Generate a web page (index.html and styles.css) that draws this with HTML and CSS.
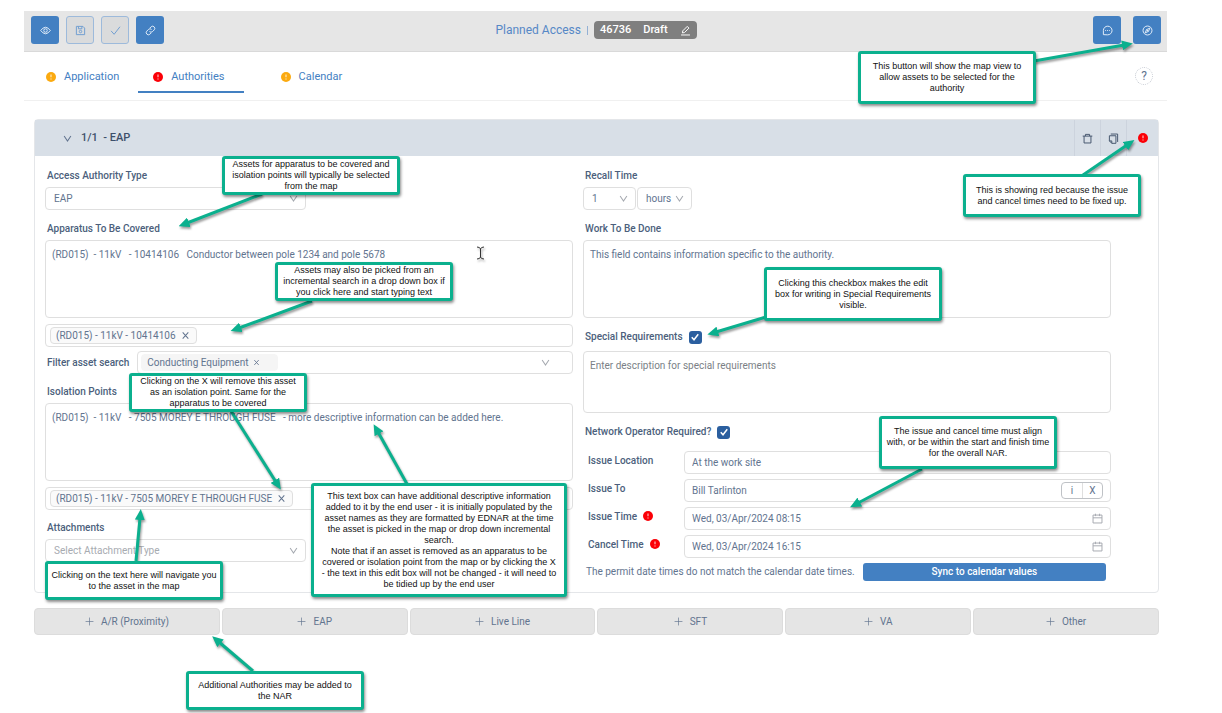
FILE: index.html
```html
<!DOCTYPE html>
<html lang="en">
<head>
<meta charset="utf-8">
<title>Planned Access</title>
<link rel="stylesheet" href="styles.css">
</head>
<body>
<svg class="defs" aria-hidden="true">
  <symbol id="i-eye" viewBox="0 0 16 16"><path d="M1 8Q8-1.500 15 8Q8 17.500 1 8Z"/><circle cx="8" cy="8" r="2.500"/></symbol>
  <symbol id="i-save" viewBox="0 0 16 16"><path d="M2 2h9.500L14 4.500V14H2ZM5 2v3.500h5V2"/><circle cx="8" cy="9.500" r="1.800"/></symbol>
  <symbol id="i-check" viewBox="0 0 16 16"><path d="M1.500 8.500L6 13.500L14.500 2.500"/></symbol>
  <symbol id="i-link" viewBox="0 0 16 16"><path d="M7 4.500L9 2.500a3.200 3.200 0 0 1 4.500 4.500L11 9.500a3.200 3.200 0 0 1-4.500 0M9 11.500L7 13.500A3.200 3.200 0 0 1 2.500 9L5 6.500a3.200 3.200 0 0 1 4.500 0"/></symbol>
  <symbol id="i-message" viewBox="0 0 16 16"><path d="M2 14V8A6.300 6.300 0 1 1 8 14.300Z"/><path d="M4.700 8h1.200M7.400 8h1.200M10.100 8h1.200"/></symbol>
  <symbol id="i-compass" viewBox="0 0 16 16"><circle cx="8" cy="8" r="6.500"/><path d="M11.500 4.500L9.300 9.300L4.500 11.500L6.700 6.700ZM6.700 6.700L9.300 9.300"/></symbol>
  <symbol id="i-edit" viewBox="0 0 16 16"><path d="M3.500 11.500L4 8.500L10.500 2L13 4.500L6.500 11ZM1.500 14.500h13"/></symbol>
  <symbol id="i-trash" viewBox="0 0 16 16"><path d="M1 4.500h14M5 4.500V2h6v2.500M3 4.500V14.500h10V4.500"/></symbol>
  <symbol id="i-copy" viewBox="0 0 16 16"><path d="M4 1.500H14V13M2 4h9.500v11H5.500L2 11.500ZM2 11.500h3.500V15"/></symbol>
  <symbol id="i-calendar" viewBox="0 0 16 16"><path d="M1.500 3h13v11.500h-13ZM1.500 7h13M5 1v3.500M11 1v3.500"/></symbol>
  <symbol id="i-down" viewBox="0 0 16 16"><path d="M2 3.500L8 12.500L14 3.500"/></symbol>
  <symbol id="i-close" viewBox="0 0 16 16"><path d="M3 2.500L13 13.500M13 2.500L3 13.500"/></symbol>
  <symbol id="i-plus" viewBox="0 0 16 16"><path d="M8 1v14M1 8h14"/></symbol>
  <symbol id="i-alert" viewBox="0 0 16 16"><circle class="alert-disc" cx="8" cy="8" r="8"/><path class="alert-mark" d="M8 4v4.500M8 10.500v1.500"/></symbol>
</svg>

<div class="page">
  <header class="topbar">
    <div class="topbar-group">
      <button class="tool" aria-label="View"><svg class="icon"><use href="#i-eye"/></svg></button>
      <button class="tool tool--off" aria-label="Save"><svg class="icon"><use href="#i-save"/></svg></button>
      <button class="tool tool--off" aria-label="Confirm"><svg class="icon"><use href="#i-check"/></svg></button>
      <button class="tool" aria-label="Link"><svg class="icon"><use href="#i-link"/></svg></button>
    </div>
    <div class="heading">
      <span class="heading-title">Planned Access</span>
      <span class="heading-rule"></span>
      <span class="badge"><span>46736</span><span>Draft</span><svg class="icon"><use href="#i-edit"/></svg></span>
    </div>
    <div class="topbar-group topbar-group--end">
      <button class="tool" aria-label="Messages"><svg class="icon"><use href="#i-message"/></svg></button>
      <button class="tool" aria-label="Map"><svg class="icon"><use href="#i-compass"/></svg></button>
    </div>
  </header>

  <nav class="tabs">
    <a class="tab" href="#application"><svg class="alert alert--warn"><use href="#i-alert"/></svg>Application</a>
    <a class="tab tab--active" href="#authorities"><svg class="alert"><use href="#i-alert"/></svg>Authorities</a>
    <a class="tab" href="#calendar"><svg class="alert alert--warn"><use href="#i-alert"/></svg>Calendar</a>
    <button class="help" aria-label="Help">?</button>
  </nav>

  <main class="content">
    <section class="panel">
      <div class="panel-head">
        <button class="panel-toggle"><svg class="icon icon--small"><use href="#i-down"/></svg><span class="panel-title">1/1 &nbsp;- EAP</span></button>
        <div class="panel-actions">
          <button class="panel-action" aria-label="Delete"><svg class="icon"><use href="#i-trash"/></svg></button>
          <button class="panel-action" aria-label="Copy"><svg class="icon"><use href="#i-copy"/></svg></button>
          <span class="panel-action panel-action--alert"><svg class="alert"><use href="#i-alert"/></svg></span>
        </div>
      </div>

      <div class="panel-body">
        <div class="column">
          <div class="field">
            <label class="label" for="type">Access Authority Type</label>
            <div class="select select--half"><select id="type"><option>EAP</option></select><svg class="icon icon--small"><use href="#i-down"/></svg></div>
          </div>
          <div class="field">
            <label class="label" for="apparatus">Apparatus To Be Covered</label>
            <textarea class="box area" id="apparatus">(RD015)  - 11kV   - 10414106   Conductor between pole 1234 and pole 5678</textarea>
            <div class="box tags"><span class="tag">(RD015) - 11kV - 10414106<button class="tag-close" aria-label="Remove"><svg class="icon icon--small"><use href="#i-close"/></svg></button></span></div>
            <div class="filter">
              <span class="label">Filter asset search</span>
              <div class="box tags tags--filter"><span class="tag tag--plain">Conducting Equipment<button class="tag-close" aria-label="Remove"><svg class="icon icon--tiny"><use href="#i-close"/></svg></button></span><svg class="icon icon--small"><use href="#i-down"/></svg></div>
            </div>
          </div>
          <div class="field field--tight">
            <label class="label" for="isolation">Isolation Points</label>
            <textarea class="box area" id="isolation">(RD015)  - 11kV   - 7505 MOREY E THROUGH FUSE   - more descriptive information can be added here.</textarea>
            <div class="box tags"><span class="tag">(RD015) - 11kV - 7505 MOREY E THROUGH FUSE<button class="tag-close" aria-label="Remove"><svg class="icon icon--small"><use href="#i-close"/></svg></button></span></div>
          </div>
          <div class="field field--tight">
            <label class="label" for="attachments">Attachments</label>
            <div class="select select--half select--empty"><select id="attachments"><option>Select Attachment Type</option></select><svg class="icon icon--small"><use href="#i-down"/></svg></div>
          </div>
        </div>

        <div class="column">
          <div class="field">
            <label class="label" for="recall">Recall Time</label>
            <div class="pair">
              <div class="select select--count"><select id="recall"><option>1</option></select><svg class="icon icon--small"><use href="#i-down"/></svg></div>
              <div class="select select--unit"><select aria-label="Recall unit"><option>hours</option></select><svg class="icon icon--small"><use href="#i-down"/></svg></div>
            </div>
          </div>
          <div class="field">
            <label class="label" for="work">Work To Be Done</label>
            <textarea class="box area" id="work">This field contains information specific to the authority.</textarea>
          </div>
          <div class="field">
            <label class="label check-label">Special Requirements<span class="check"><input type="checkbox" checked><svg class="icon"><use href="#i-check"/></svg></span></label>
            <textarea class="box area area--short" aria-label="Special requirements" placeholder="Enter description for special requirements"></textarea>
          </div>
          <div class="field">
            <label class="label check-label">Network Operator Required?<span class="check"><input type="checkbox" checked><svg class="icon"><use href="#i-check"/></svg></span></label>
          </div>
          <div class="rows">
            <label class="label" for="location">Issue Location</label>
            <div class="box entry"><input id="location" value="At the work site"></div>
            <label class="label" for="issue-to">Issue To</label>
            <div class="box entry"><input id="issue-to" value="Bill Tarlinton"><span class="mini"><button>i</button><button>X</button></span></div>
            <label class="label" for="issue-time">Issue Time<svg class="alert"><use href="#i-alert"/></svg></label>
            <div class="box entry"><input id="issue-time" value="Wed, 03/Apr/2024 08:15"><svg class="icon"><use href="#i-calendar"/></svg></div>
            <label class="label" for="cancel-time">Cancel Time<svg class="alert"><use href="#i-alert"/></svg></label>
            <div class="box entry"><input id="cancel-time" value="Wed, 03/Apr/2024 16:15"><svg class="icon"><use href="#i-calendar"/></svg></div>
          </div>
          <div class="sync">
            <span>The permit date times do not match the calendar date times.</span>
            <button class="sync-button">Sync to calendar values</button>
          </div>
        </div>
      </div>
    </section>

    <div class="adders">
      <button class="adder"><svg class="icon"><use href="#i-plus"/></svg>A/R (Proximity)</button>
      <button class="adder"><svg class="icon"><use href="#i-plus"/></svg>EAP</button>
      <button class="adder"><svg class="icon"><use href="#i-plus"/></svg>Live Line</button>
      <button class="adder"><svg class="icon"><use href="#i-plus"/></svg>SFT</button>
      <button class="adder"><svg class="icon"><use href="#i-plus"/></svg>VA</button>
      <button class="adder"><svg class="icon"><use href="#i-plus"/></svg>Other</button>
    </div>
  </main>
</div>

<div class="notes">
  <svg class="arrows" viewBox="0 0 1222 713" aria-hidden="true">
    <defs><marker id="head" markerUnits="userSpaceOnUse" markerWidth="11" markerHeight="10" refX="2" refY="5" orient="auto"><path d="M0 0L11 5L0 10Z"/></marker></defs>
    <path d="M1034 61L1124 45"/>
    <path d="M1083 175L1127 145"/>
    <path d="M262 194L187 223"/>
    <path d="M312 301L239 328"/>
    <path d="M231 411L276 482"/>
    <path d="M136 561L140 518"/>
    <path d="M253 671L219 642"/>
    <path d="M407 484L378 432"/>
    <path d="M766 317L716 332"/>
    <path d="M922 469L858 503"/>
    <path class="cursor" d="M477 247q3 0 3.500 2q.500-2 3.500-2M480.500 249v8M477 259q3 0 3.500-2q.500 2 3.500 2"/>
  </svg>
  <p class="note note--map">This button will show the map view to<br>allow assets to be selected for the<br>authority</p>
  <p class="note note--red">This is showing red because the issue<br>and cancel times need to be fixed up.</p>
  <p class="note note--assets">Assets for apparatus to be covered and<br>isolation points will typically be selected<br>from the map</p>
  <p class="note note--search">Assets may also be picked from an<br>incremental search in a drop down box if<br>you click here and start typing text</p>
  <p class="note note--remove">Clicking on the X will remove this asset<br>as an isolation point. Same for the<br>apparatus to be covered</p>
  <p class="note note--navigate">Clicking on the text here will navigate you<br>to the asset in the map</p>
  <p class="note note--add">Additional Authorities may be added to<br>the NAR</p>
  <p class="note note--text">This text box can have additional descriptive information<br>added to it by the end user - it is initially populated by the<br>asset names as they are formatted by EDNAR at the time<br>the asset is picked in the map or drop down incremental<br>search.<br>Note that if an asset is removed as an apparatus to be<br>covered or isolation point from the map or by clicking the X<br>- the text in this edit box will not be changed - it will need to<br>be tidied up by the end user</p>
  <p class="note note--check">Clicking this checkbox makes the edit<br>box for writing in Special Requirements<br>visible.</p>
  <p class="note note--time">The issue and cancel time must align<br>with, or be within the start and finish time<br>for the overall NAR.</p>
</div>
</body>
</html>
```
FILE: styles.css
```css
:root {
  --blue: #4380c2;
  --ink: #4c5f7c;
  --text: #62748f;
  --line: #dfdfdf;
  --green: #0bb08e;
}

* { box-sizing: border-box; }

body {
  margin: 0;
  position: relative;
  min-height: 100vh;
  background: #fff;
  color: var(--text);
  font: 10px/16px Roboto, "Liberation Sans", sans-serif;
}

button, input, select, textarea { font: inherit; color: inherit; margin: 0; }
button { padding: 0; border: 0; background: none; cursor: pointer; }
.defs { position: absolute; width: 0; height: 0; }

.icon {
  flex: none;
  width: 11px;
  height: 11px;
  fill: none;
  stroke: currentColor;
  stroke-width: 1.4;
}
.icon--small { width: 9px; height: 9px; stroke-width: 1.8; }
.icon--tiny { width: 7px; height: 7px; stroke-width: 2; }

.alert { flex: none; width: 10px; height: 10px; color: #fb0007; }
.alert--warn { color: #fbaa10; }
.alert-disc { fill: currentColor; }
.alert-mark { fill: none; stroke: #fff; stroke-width: 2; stroke-opacity: .7; }

.page { padding: 11px 55px 77px 24px; }

.topbar {
  display: grid;
  grid-template-columns: 1fr auto 1fr;
  align-items: center;
  height: 41px;
  padding: 0 6px 2px 7px;
  background: #e6e6e6;
  border-bottom: 1px solid #d9d9d9;
}
.topbar-group { display: flex; gap: 7px; }
.topbar-group--end { justify-content: flex-end; gap: 12px; }
.tool {
  display: grid;
  place-items: center;
  width: 28px;
  height: 28px;
  border-radius: 3px;
  background: var(--blue);
  color: #e6effa;
}
.tool--off { border: 1px solid #9dbadb; background: #dadbdc; color: #6f9dd0; }
.heading { display: flex; align-items: center; gap: 6px; }
.heading-title { color: #5688c6; font-size: 12px; }
.heading-rule { width: 1px; height: 9px; background: #93b0d4; }
.badge {
  display: flex;
  align-items: center;
  gap: 12px;
  height: 18px;
  padding: 0 6px;
  border-radius: 4px;
  background: #7f7f7f;
  color: #fff;
  font-size: 11px;
  font-weight: 500;
}

.tabs {
  display: flex;
  align-items: center;
  height: 49px;
  padding-right: 14px;
  border-bottom: 1px solid #f0f0f0;
}
.tab {
  display: flex;
  align-items: center;
  gap: 8px;
  height: 34px;
  margin-right: 3px;
  padding: 1px 16px 0 22px;
  color: var(--blue);
  font-size: 11px;
  text-decoration: none;
}
.tab--active { margin-right: 15px; padding: 3px 19px 0 15px; border-bottom: 2px solid var(--blue); }
.help {
  width: 18px;
  height: 18px;
  margin-left: auto;
  border: 1px dotted #c4c9d1;
  border-radius: 50%;
  font-size: 12px;
  line-height: 16px;
}

.content { padding: 18px 8px 0 10px; }
.panel { border: 1px solid #e4e6e9; border-radius: 4px; }
.panel-head {
  display: flex;
  justify-content: space-between;
  height: 36px;
  background: #d8dfe7;
}
.panel-toggle { display: flex; align-items: center; gap: 9px; padding-left: 28px; }
.panel-title { color: #3d4f6a; font-size: 11px; font-weight: 500; }
.panel-actions { display: flex; }
.panel-action {
  display: grid;
  place-items: center;
  width: 26px;
  border-left: 1px solid #ccd3dd;
  color: #44546c;
}
.panel-action--alert { width: 32px; }

.panel-body {
  display: grid;
  grid-template-columns: 1fr 1fr;
  gap: 10px;
  padding: 12px 47px 11px 10px;
}
.field { display: flex; flex-direction: column; gap: 3px; }
.field + .field { margin-top: 11px; }
.field + .field--tight { margin-top: 10px; }
.label { padding-left: 2px; color: var(--ink); font-weight: 500; }

.box {
  width: 100%;
  border: 1px solid var(--line);
  border-radius: 4px;
  background: #fff;
}
.area {
  display: block;
  height: 78px;
  padding: 6px;
  resize: none;
  outline: 0;
}
.area--short { height: 62px; }
.area::placeholder { color: #7b7f86; opacity: 1; }

.select { display: grid; align-items: center; }
.select select {
  grid-area: 1 / 1;
  width: 100%;
  height: 23px;
  padding: 0 8px;
  border: 1px solid var(--line);
  border-radius: 4px;
  background: #fff;
  appearance: none;
}
.select .icon { grid-area: 1 / 1; justify-self: end; margin-right: 8px; color: #a5a9b0; pointer-events: none; }
.select--half { width: 261px; }
.select--count { width: 53px; }
.select--unit { width: 55px; }
.select--empty select { color: #a7abb1; }
.pair { display: flex; gap: 1px; }

.tags { display: flex; align-items: center; height: 23px; margin-top: 3px; padding: 0 4px; }
.tag {
  display: flex;
  align-items: center;
  gap: 5px;
  height: 17px;
  padding: 0 6px 0 5px;
  border: 1px solid var(--line);
  border-radius: 4px;
  background: #fafafa;
}
.tag-close { display: grid; }
.tag--plain { width: 137px; border-color: #f5f5f5; background: #f5f5f5; }
.tags--filter { justify-content: space-between; margin: 0; padding: 0 22px 0 3px; }
.tags--filter > .icon { color: #a5a9b0; }
.filter { display: flex; align-items: center; gap: 8px; margin-top: 1px; }
.filter .label { flex: none; }

.check-label { display: flex; align-items: center; gap: 6px; }
.check { display: grid; place-items: center; }
.check input {
  grid-area: 1 / 1;
  width: 13px;
  height: 13px;
  border-radius: 3px;
  background: #2b5f9f;
  appearance: none;
}
.check .icon { grid-area: 1 / 1; width: 8px; height: 8px; color: #fff; stroke-width: 3; pointer-events: none; }
.check-label + .area { margin-top: 3px; }

.rows {
  display: grid;
  grid-template-columns: 96px 1fr;
  gap: 5px 0;
  margin-top: 11px;
  padding-left: 5px;
}
.rows .label { display: flex; gap: 6px; padding: 2px 0 0; }
.rows .label .alert { margin-top: 2px; }
.entry { display: flex; align-items: center; height: 23px; padding: 0 7px; }
.entry input { flex: 1; min-width: 0; padding: 0; border: 0; background: none; outline: 0; }
.entry > .icon { color: #a5a9b0; }
.mini { display: flex; border: 1px solid #bfc2c6; border-radius: 4px; }
.mini button { width: 20px; height: 15px; line-height: 15px; }
.mini button + button { border-left: 1px solid var(--line); }

.sync { display: flex; align-items: center; gap: 8px; margin-top: 5px; padding: 0 5px 0 3px; }
.sync-button {
  flex: 1;
  height: 18px;
  border-radius: 3px;
  background: var(--blue);
  color: #fff;
  font-weight: 500;
}

.adders { display: grid; grid-template-columns: repeat(6, 1fr); gap: 2px; margin-top: 15px; }
.adder {
  display: flex;
  align-items: center;
  justify-content: center;
  gap: 7px;
  height: 27px;
  border: 1px solid #dcdcdc;
  border-radius: 4px;
  background: #e5e5e5;
}
.adder .icon { width: 9px; height: 9px; stroke-width: 1.2; }

.notes { position: absolute; top: 0; left: 0; width: 1222px; height: 713px; pointer-events: none; }
.arrows {
  position: absolute;
  top: 0;
  left: 0;
  width: 1222px;
  height: 713px;
  fill: none;
  stroke: var(--green);
  stroke-width: 3;
  filter: drop-shadow(1px 2px 1px rgba(0, 0, 0, .4));
}
.arrows path { marker-end: url(#head); }
.arrows marker path { fill: var(--green); stroke: none; marker-end: none; }
.arrows .cursor { stroke: #333; stroke-width: 1; marker-end: none; }
.note {
  position: absolute;
  display: grid;
  place-content: center;
  width: 178px;
  height: 39px;
  margin: 0;
  border: 3px solid var(--green);
  border-radius: 3px;
  background: #fff;
  box-shadow: 1px 2px 3px rgba(0, 0, 0, .45);
  color: #111;
  font: 9px/11px "Liberation Sans", Arial, sans-serif;
  text-align: center;
  white-space: nowrap;
}
.note--map { left: 858px; top: 51px; height: 53px; }
.note--red { left: 963px; top: 174px; height: 43px; }
.note--assets { left: 222px; top: 156px; }
.note--search { left: 275px; top: 262px; }
.note--remove { left: 129px; top: 373px; }
.note--navigate { left: 45px; top: 561px; }
.note--add { left: 186px; top: 671px; }
.note--text { left: 311px; top: 483px; width: 256px; height: 114px; }
.note--check { left: 764px; top: 267px; height: 54px; }
.note--time { left: 879px; top: 416px; height: 53px; }
```
